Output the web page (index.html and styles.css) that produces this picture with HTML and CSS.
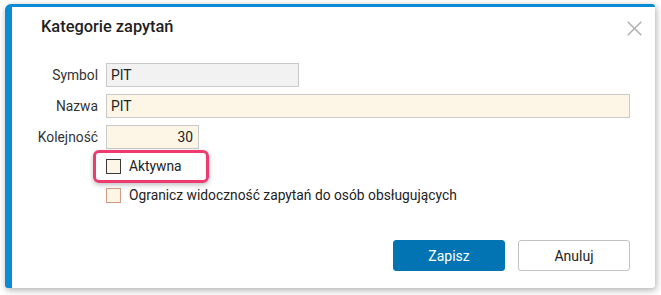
FILE: index.html
```html
<!DOCTYPE html>
<html lang="pl">
<head>
<meta charset="utf-8">
<title>Kategorie zapytań</title>
<link rel="stylesheet" href="styles.css">
</head>
<body>
<div class="dialog">
  <div class="header">
    <div class="title">Kategorie zapytań</div>
    <svg class="close" width="15" height="15" viewBox="0 0 15 15"><path d="M0.7 0.7 L14.3 14.3 M14.3 0.7 L0.7 14.3" stroke="#b3b3b3" stroke-width="1.6" fill="none"/></svg>
  </div>
  <div class="form">
    <label class="lbl">Symbol</label>
    <div class="field"><div class="input input-ro input-sym">PIT</div></div>
    <label class="lbl">Nazwa</label>
    <div class="field"><div class="input input-ed input-full">PIT</div></div>
    <label class="lbl">Kolejność</label>
    <div class="field"><div class="input input-ed input-num">30</div></div>
    <div class="check-row first">
      <span class="box box-dark"></span><span class="check-text">Aktywna</span>
      <span class="highlight"></span>
    </div>
    <div class="check-row second">
      <span class="box box-light"></span><span class="check-text">Ogranicz widoczność zapytań do osób obsługujących</span>
    </div>
  </div>
  <div class="footer">
    <button class="btn btn-primary">Zapisz</button>
    <button class="btn btn-default">Anuluj</button>
  </div>
</div>
</body>
</html>
```
FILE: styles.css
```css
html, body {
  margin: 0;
  padding: 0;
  background: #ffffff;
}
body {
  font-family: Roboto, "Liberation Sans", Arial, sans-serif;
  color: #333333;
  width: 661px;
  height: 295px;
  overflow: hidden;
}
.dialog {
  box-sizing: border-box;
  margin: 4px 0 0 5px;
  width: 650px;
  height: 284px;
  background: #ffffff;
  border-top: 3px solid #0a8bd3;
  border-left: 7px solid #0a8bd3;
  border-radius: 6px 3px 3px 3px;
  box-shadow: 1px 2px 7px rgba(0, 0, 0, 0.33);
  display: flex;
  flex-direction: column;
}
.header {
  display: flex;
  align-items: flex-start;
  padding: 10px 13px 0 29px;
}
.title {
  font-size: 16.4px;
  line-height: 20px;
  font-weight: 500;
  color: #1f1f1f;
  flex: 1;
}
.close {
  margin-top: 4px;
  display: block;
}
.form {
  margin-top: 26px;
  display: grid;
  grid-template-columns: 86px 1fr;
  column-gap: 8px;
  row-gap: 7px;
  padding-right: 25px;
  font-size: 13.8px;
}
.lbl {
  text-align: right;
  align-self: center;
  color: #333333;
}
.field {
  display: flex;
}
.input {
  box-sizing: border-box;
  height: 24px;
  border: 1px solid #c9c9c9;
  padding: 0 5px 0 4px;
  display: flex;
  align-items: center;
  color: #222222;
}
.input-ro {
  background: #f2f2f2;
}
.input-ed {
  background: #fdf5e6;
}
.input-sym {
  width: 193px;
}
.input-full {
  flex: 1;
}
.input-num {
  width: 93px;
  justify-content: flex-end;
}
.check-row {
  grid-column: 2;
  height: 20px;
  display: flex;
  align-items: center;
  position: relative;
  color: #222222;
}
.check-row.first {
  margin-top: 0;
}
.check-row.second {
  margin-top: 2px;
}
.box {
  box-sizing: border-box;
  width: 15px;
  height: 15px;
  background: #fdf5e6;
  margin-right: 8px;
  flex: none;
}
.box-dark {
  border: 1px solid #3a3a3a;
}
.box-light {
  border: 1px solid #d49a82;
}
.highlight {
  position: absolute;
  left: -13px;
  top: -6px;
  width: 116px;
  height: 33px;
  box-sizing: border-box;
  border: 3px solid #ef3a6f;
  border-radius: 6px;
  box-shadow: 0 2px 5px rgba(0, 0, 0, 0.25);
  pointer-events: none;
}
.footer {
  margin-top: auto;
  display: flex;
  justify-content: flex-end;
  gap: 13px;
  padding: 0 25px 17px 0;
}
.btn {
  box-sizing: border-box;
  width: 112px;
  height: 31px;
  border-radius: 3px;
  font-family: Roboto, "Liberation Sans", Arial, sans-serif;
  font-size: 14px;
  cursor: pointer;
}
.btn-primary {
  background: #0274b3;
  border: 1px solid #0274b3;
  color: #ffffff;
}
.btn-default {
  background: #ffffff;
  border: 1px solid #c3c3c3;
  color: #222222;
}
```
